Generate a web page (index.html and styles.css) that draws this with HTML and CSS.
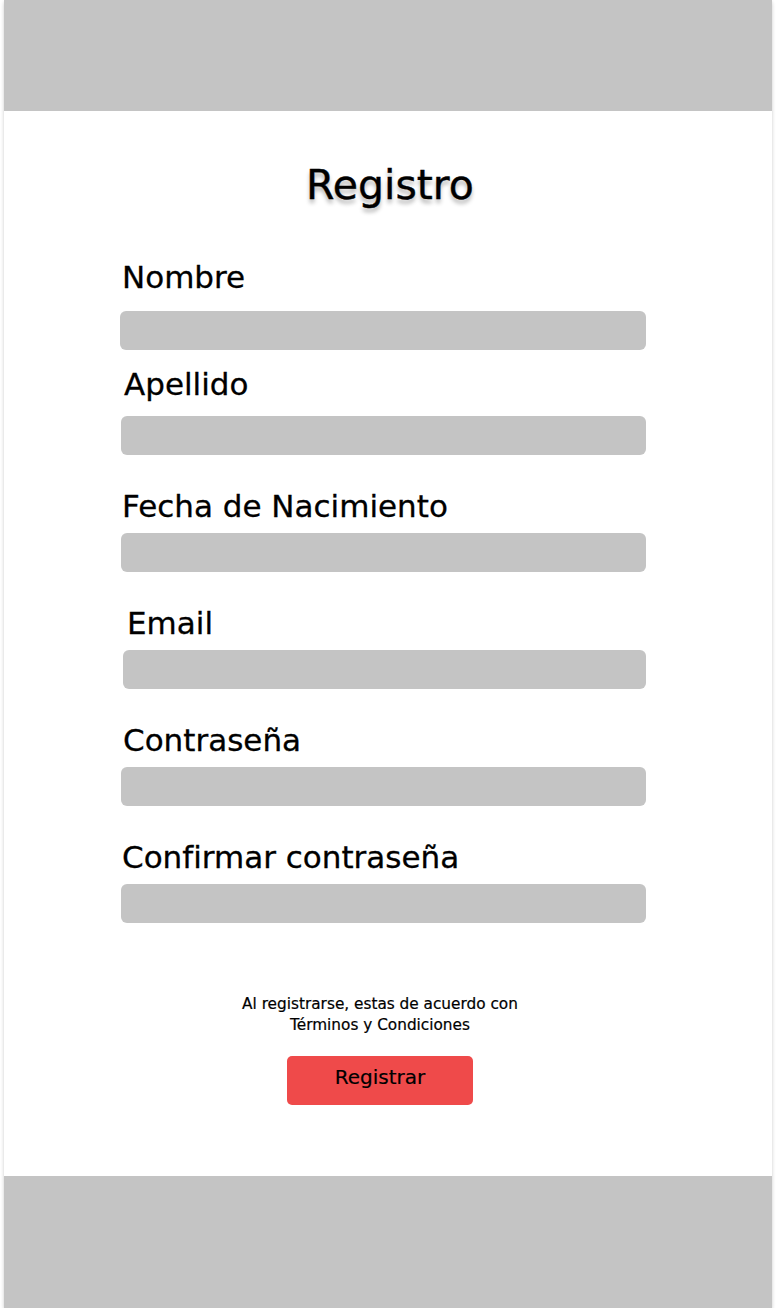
FILE: index.html
```html
<!DOCTYPE html>
<html lang="es">
<head>
<meta charset="utf-8">
<title>Registro</title>
<link rel="stylesheet" href="styles.css">
</head>
<body>
<div class="frame">
  <header class="topbar"></header>
  <main class="content">
    <h1 class="title">Registro</h1>
    <form class="form">
      <div class="field field-first">
        <label class="label">Nombre</label>
        <div class="input"></div>
      </div>
      <div class="field field-second">
        <label class="label label-in3">Apellido</label>
        <div class="input"></div>
      </div>
      <div class="field">
        <label class="label">Fecha de Nacimiento</label>
        <div class="input"></div>
      </div>
      <div class="field">
        <label class="label label-in5">Email</label>
        <div class="input input-shift"></div>
      </div>
      <div class="field">
        <label class="label label-in1">Contraseña</label>
        <div class="input"></div>
      </div>
      <div class="field">
        <label class="label">Confirmar contraseña</label>
        <div class="input"></div>
      </div>
    </form>
    <p class="terms">Al registrarse, estas de acuerdo con<br>Términos y Condiciones</p>
    <button class="submit" type="button">Registrar</button>
  </main>
  <footer class="bottombar"></footer>
</div>
</body>
</html>
```

FILE: styles.css
```css
html, body {
  margin: 0;
  padding: 0;
  background: #ffffff;
}

body {
  font-family: "DejaVu Sans", "Liberation Sans", sans-serif;
  color: #000;
}

.frame {
  width: 768px;
  height: 1308px;
  margin-left: 4px;
  background: #ffffff;
  display: flex;
  flex-direction: column;
  box-shadow: 0 3px 4px rgba(0, 0, 0, 0.14), 0 0 3px rgba(0, 0, 0, 0.08);
}

.topbar {
  height: 111px;
  background: #c4c4c4;
  flex: none;
}

.content {
  flex: 1;
  display: flex;
  flex-direction: column;
  padding-top: 50px;
}

.title {
  margin: 0;
  padding-left: 4px;
  text-align: center;
  font-size: 41px;
  line-height: 48px;
  font-weight: normal;
  -webkit-text-stroke: 0.4px #000;
  text-shadow: 0 4px 4px rgba(0, 0, 0, 0.3);
}

.form {
  margin: 50px 0 0 117px;
  width: 525px;
  display: flex;
  flex-direction: column;
}

.field {
  display: flex;
  flex-direction: column;
  gap: 9px;
  margin-top: 33px;
}

.field-first {
  margin-top: 0;
  gap: 16px;
}

.field-second {
  margin-top: 16px;
  gap: 14px;
}

.label {
  font-size: 31px;
  line-height: 36px;
  margin-left: 1px;
  -webkit-text-stroke: 0.3px #000;
}

.label-in1 { margin-left: 2px; }
.label-in3 { margin-left: 3px; }
.label-in5 { margin-left: 6px; }

.input {
  height: 39px;
  background: #c4c4c4;
  border-radius: 6px;
}

.field-first .input {
  margin-left: -1px;
}

.input-shift {
  margin-left: 2px;
}

.terms {
  margin: 71px 16px 0 0;
  align-self: center;
  text-align: center;
  font-size: 15.3px;
  line-height: 21px;
  -webkit-text-stroke: 0.2px #000;
}

.submit {
  align-self: center;
  margin: 20px 16px 0 0;
  width: 186px;
  height: 49px;
  padding: 9px 0 16px;
  border: none;
  border-radius: 5px;
  background: #ef4a4a;
  font-family: "DejaVu Sans", "Liberation Sans", sans-serif;
  font-size: 20px;
  line-height: 24px;
  color: #000;
  -webkit-text-stroke: 0.2px #000;
}

.bottombar {
  height: 132px;
  background: #c4c4c4;
  flex: none;
}
```
